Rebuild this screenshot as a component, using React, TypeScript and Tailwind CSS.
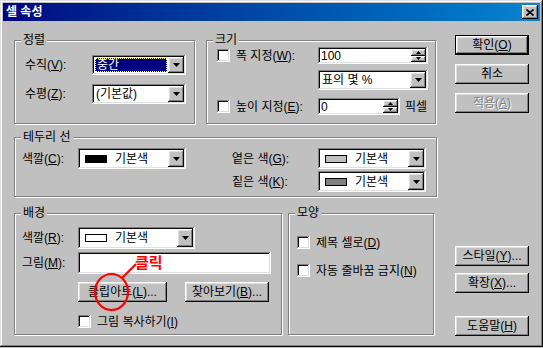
const SUNKEN =
  "shadow-[inset_-1px_-1px_#ffffff,inset_1px_1px_#808080,inset_-2px_-2px_#dfdfdf,inset_2px_2px_#0a0a0a]";
const RAISED =
  "shadow-[inset_-1px_-1px_#0a0a0a,inset_1px_1px_#ffffff,inset_-2px_-2px_#808080,inset_2px_2px_#dfdfdf]";

function Arrow() {
  return (
    <svg width="7" height="4" viewBox="0 0 7 4">
      <path d="M0 0h7L3.5 4z" fill="#000" />
    </svg>
  );
}

function Group({ title, className, children }: { title: string; className: string; children?: React.ReactNode }) {
  return (
    <div className={`relative border border-[#808080] shadow-[inset_1px_1px_0_#fff,1px_1px_0_#fff] ${className}`}>
      <span className="absolute -top-[8px] left-[6px] bg-[#c0c0c0] px-[2px] leading-[14px]">{title}</span>
      {children}
    </div>
  );
}

function Combo({ className, children, selected }: { className: string; children: React.ReactNode; selected?: boolean }) {
  return (
    <div className={`flex shrink-0 bg-white p-[2px] ${SUNKEN} ${className}`}>
      <div className="flex min-w-0 flex-1 p-[1px]">
        {selected ? (
          <div className="flex flex-1 items-center border border-dotted border-[#ffff80] bg-[#000080] pl-[1px] text-white">
            {children}
          </div>
        ) : (
          <div className="flex flex-1 items-center pl-[1px]">{children}</div>
        )}
      </div>
      <div className={`flex w-[16px] items-center justify-center bg-[#c0c0c0] ${RAISED}`}>
        <Arrow />
      </div>
    </div>
  );
}

function Swatch({ fill }: { fill: string }) {
  return <span className={`ml-[3px] mr-[8px] inline-block h-[8px] w-[22px] border border-black ${fill}`} />;
}

function SpinBox({ className, value }: { className: string; value: string }) {
  return (
    <div className={`flex shrink-0 bg-white p-[2px] ${SUNKEN} ${className}`}>
      <span className="flex flex-1 items-center pl-[1px]">{value}</span>
      <div className="flex w-[15px] flex-col">
        <div className={`flex flex-1 items-center justify-center bg-[#c0c0c0] ${RAISED}`}>
          <svg width="5" height="3" viewBox="0 0 5 3">
            <path d="M2.5 0L5 3H0z" fill="#000" />
          </svg>
        </div>
        <div className={`flex flex-1 items-center justify-center bg-[#c0c0c0] ${RAISED}`}>
          <svg width="5" height="3" viewBox="0 0 5 3">
            <path d="M0 0h5L2.5 3z" fill="#000" />
          </svg>
        </div>
      </div>
    </div>
  );
}

function Check({ children, className = "" }: { children: React.ReactNode; className?: string }) {
  return (
    <div className={`flex h-[17px] items-center ${className}`}>
      <span className={`h-[13px] w-[13px] shrink-0 bg-white ${SUNKEN}`} />
      <span className="ml-[6px] whitespace-nowrap">{children}</span>
    </div>
  );
}

function Btn({
  children,
  className = "",
  def,
  disabled,
}: {
  children: React.ReactNode;
  className?: string;
  def?: boolean;
  disabled?: boolean;
}) {
  return (
    <div
      className={`flex h-[20px] shrink-0 items-center justify-center whitespace-nowrap bg-[#c0c0c0] ${RAISED} ${
        def ? "border border-black" : ""
      } ${disabled ? "text-[#808080] [text-shadow:1px_1px_0_#fff]" : ""} ${className}`}
    >
      {children}
    </div>
  );
}

const U = ({ c }: { c: string }) => <span className="underline">{c}</span>;

export default function App() {
  return (
    <div className="h-[348px] w-[543px] bg-[#c0c0c0] font-['Liberation_Sans','Noto_Sans_CJK_KR',sans-serif] text-[12px] leading-[14px] text-black">
      <div className="relative h-[347px] w-[543px] bg-[#c0c0c0] p-[3px] shadow-[inset_-1px_-1px_#0a0a0a,inset_1px_1px_#dfdfdf,inset_-2px_-2px_#808080,inset_2px_2px_#ffffff]">
        {/* title bar */}
        <div className="flex h-[18px] items-center bg-gradient-to-r from-[#000080] to-[#1084d0] pl-[3px] pr-[2px]">
          <span className="flex-1 font-bold text-white">셀 속성</span>
          <div className={`flex h-[14px] w-[16px] items-center justify-center bg-[#c0c0c0] ${RAISED}`}>
            <svg width="8" height="7" viewBox="0 0 8 7">
              <path d="M0.5 0.5L7.5 6.5M7.5 0.5L0.5 6.5" stroke="#000" strokeWidth="1.6" />
            </svg>
          </div>
        </div>

        <div className="flex">
          <div className="ml-[11px] w-[423px]">
            <div className="mt-[19px] flex">
              <Group title="정렬" className="h-[84px] w-[181px]">
                <div className="flex flex-col gap-[9px] pl-[10px] pt-[14px]">
                  <div className="flex h-[20px] items-center">
                    <span className="w-[67px]">
                      수직(<U c="V" />):
                    </span>
                    <Combo className="h-[20px] w-[94px]" selected>
                      중간
                    </Combo>
                  </div>
                  <div className="flex h-[20px] items-center">
                    <span className="w-[67px]">
                      수평(<U c="Z" />):
                    </span>
                    <Combo className="h-[20px] w-[94px]">(기본값)</Combo>
                  </div>
                </div>
              </Group>
              <Group title="크기" className="ml-[11px] h-[84px] w-[230px]">
                <div className="pl-[10px] pt-[6px]">
                  <div className="flex h-[17px] items-center">
                    <Check className="w-[101px]">
                      폭 지정(<U c="W" />):
                    </Check>
                    <SpinBox className="h-[17px] w-[110px]" value="100" />
                  </div>
                  <div className="mt-[6px] flex h-[20px] items-center pl-[101px]">
                    <Combo className="h-[20px] w-[110px]">표의 몇 %</Combo>
                  </div>
                  <div className="mt-[8px] flex h-[17px] items-center">
                    <Check className="w-[101px]">
                      높이 지정(<U c="E" />):
                    </Check>
                    <SpinBox className="h-[17px] w-[82px]" value="0" />
                    <span className="ml-[5px]">픽셀</span>
                  </div>
                </div>
              </Group>
            </div>

            <Group title="테두리 선" className="mt-[13px] h-[60px] w-[423px]">
              <div className="flex pl-[7px] pt-[10px]">
                <div className="flex h-[21px] items-center">
                  <span className="w-[56px]">
                    색깔(<U c="C" />):
                  </span>
                  <Combo className="h-[21px] w-[108px]">
                    <Swatch fill="bg-black" />
                    기본색
                  </Combo>
                </div>
                <div className="ml-[46px] flex flex-col gap-[2px]">
                  <div className="flex h-[21px] items-center">
                    <span className="w-[86px]">
                      옅은 색(<U c="G" />):
                    </span>
                    <Combo className="h-[21px] w-[108px]">
                      <Swatch fill="bg-[#c0c0c0]" />
                      기본색
                    </Combo>
                  </div>
                  <div className="flex h-[21px] items-center">
                    <span className="w-[86px]">
                      짙은 색(<U c="K" />):
                    </span>
                    <Combo className="h-[21px] w-[108px]">
                      <Swatch fill="bg-[#808080]" />
                      기본색
                    </Combo>
                  </div>
                </div>
              </div>
            </Group>

            <div className="mt-[16px] flex">
              <Group title="배경" className="h-[122px] w-[268px]">
                <div className="pl-[7px] pt-[13px]">
                  <div className="flex h-[22px] items-center">
                    <span className="w-[56px]">
                      색깔(<U c="R" />):
                    </span>
                    <Combo className="h-[22px] w-[117px]">
                      <Swatch fill="bg-white" />
                      기본색
                    </Combo>
                  </div>
                  <div className="mt-[3px] flex h-[22px] items-center">
                    <span className="w-[56px]">
                      그림(<U c="M" />):
                    </span>
                    <div className={`h-[22px] w-[193px] bg-white ${SUNKEN}`} />
                  </div>
                  <div className="mt-[8px] flex pl-[56px]">
                    <Btn className="w-[89px]">
                      클립아트(<U c="L" />)...
                    </Btn>
                    <Btn className="ml-[18px] w-[84px]">
                      찾아보기(<U c="B" />)...
                    </Btn>
                  </div>
                  <Check className="ml-[56px] mt-[11px]">
                    그림 복사하기(<U c="I" />)
                  </Check>
                </div>
              </Group>
              <Group title="모양" className="ml-[6px] h-[122px] w-[146px]">
                <div className="pl-[8px] pt-[20px]">
                  <Check>
                    제목 셀로(<U c="D" />)
                  </Check>
                  <Check className="mt-[11px]">
                    자동 줄바꿈 금지(<U c="N" />)
                  </Check>
                </div>
              </Group>
            </div>
          </div>

          <div className="ml-[18px] flex w-[74px] flex-col">
            <Btn def className="mt-[14px]">
              확인(<U c="O" />)
            </Btn>
            <Btn className="mt-[9px]">취소</Btn>
            <Btn disabled className="mt-[9px]">
              적용(<U c="A" />)
            </Btn>
            <Btn className="mt-[133px]">
              스타일(<U c="Y" />)...
            </Btn>
            <Btn className="mt-[7px]">
              확장(<U c="X" />)...
            </Btn>
            <Btn className="mt-[23px]">
              도움말(<U c="H" />)
            </Btn>
          </div>
        </div>

        {/* red annotation */}
        <svg className="pointer-events-none absolute left-0 top-0" width="543" height="348">
          <ellipse cx="111.5" cy="292" rx="16.5" ry="18" fill="none" stroke="#ff0000" strokeWidth="2.2" />
          <path d="M122 278L136 264" stroke="#ff0000" strokeWidth="2.2" />
        </svg>
        <span className="absolute left-[135px] top-[255px] text-[15px] font-bold leading-[16px] text-[#ff0000]">클릭</span>
      </div>
    </div>
  );
}
